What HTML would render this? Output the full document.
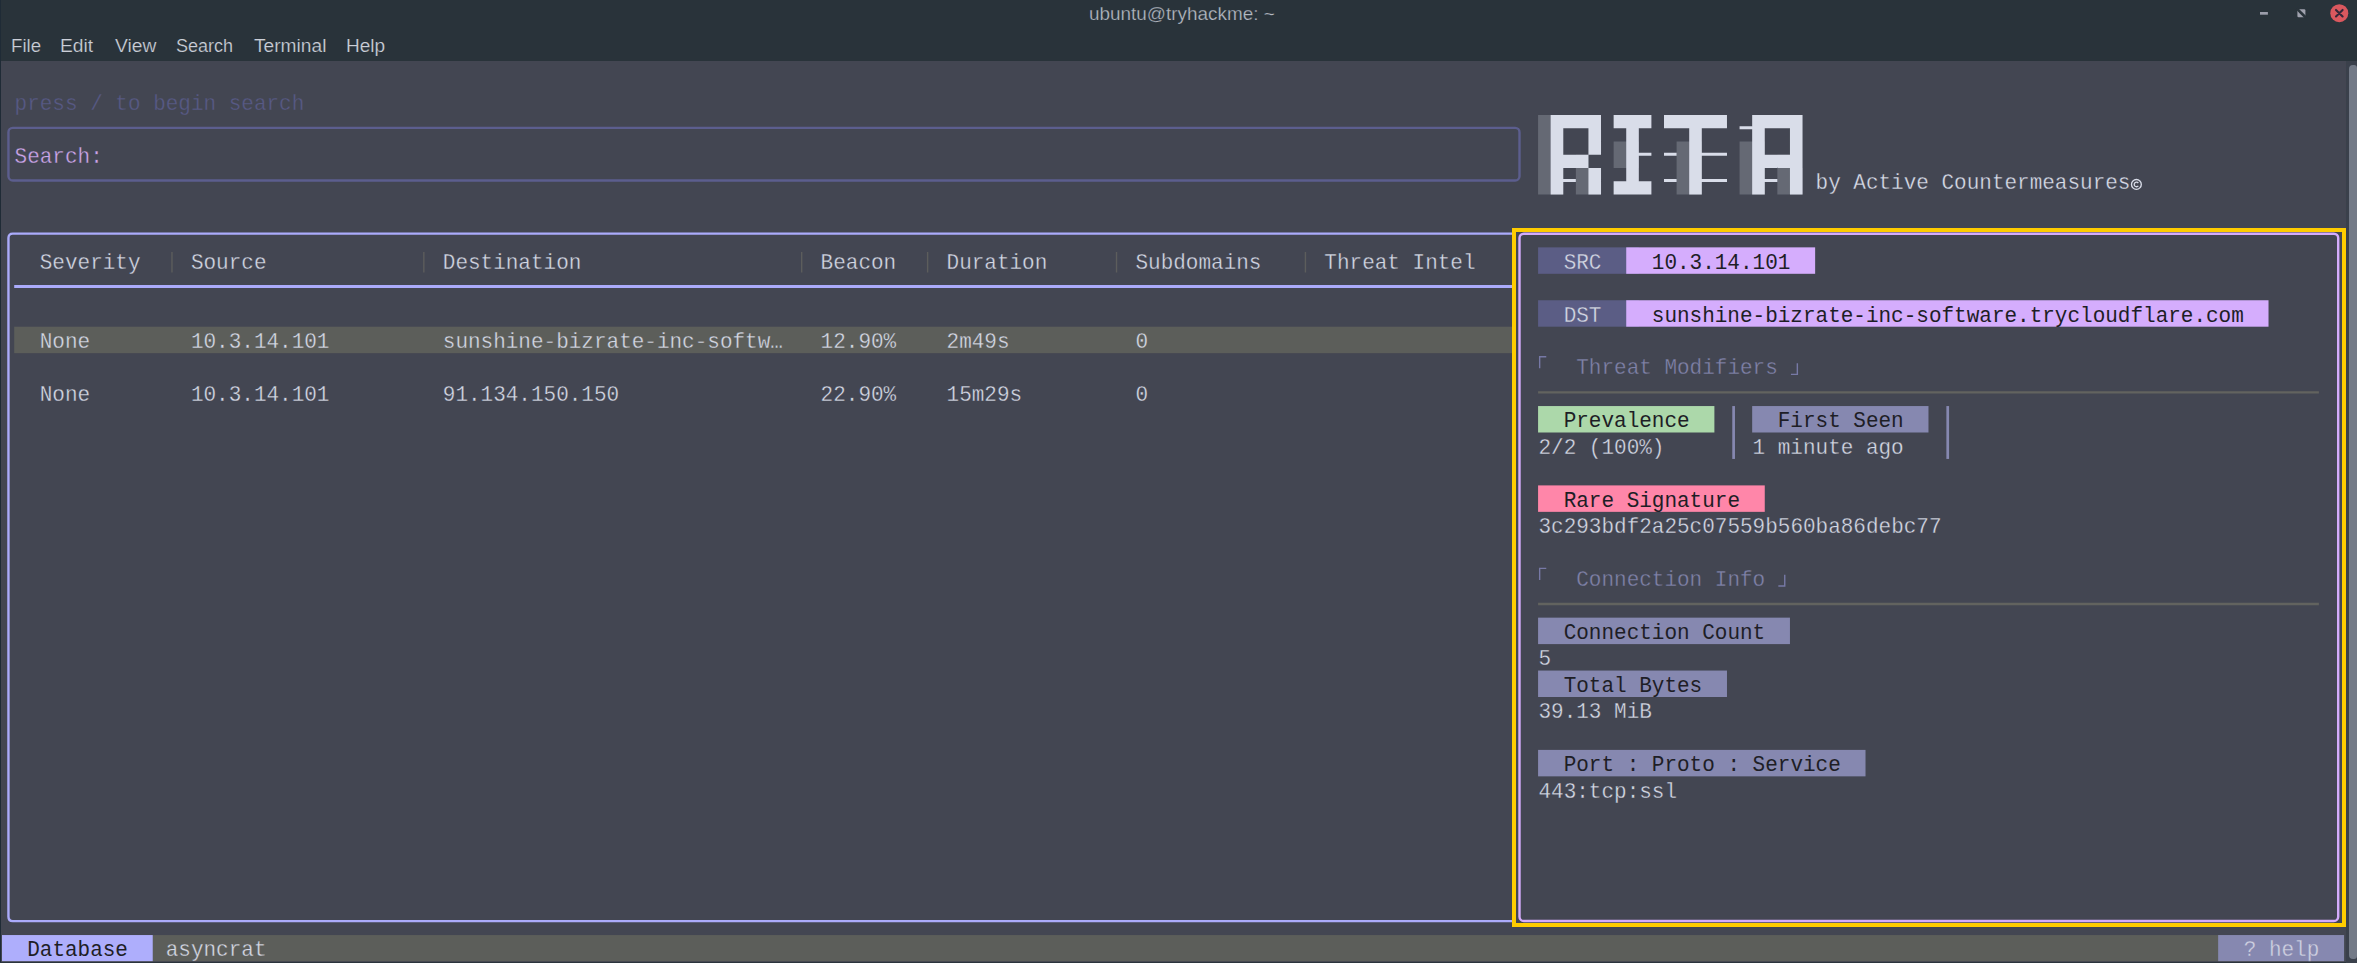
<!DOCTYPE html>
<html><head><meta charset="utf-8"><title>ubuntu@tryhackme: ~</title><style>
html,body{margin:0;padding:0;}
body{width:2357px;height:963px;background:#434652;position:relative;overflow:hidden;font-family:"Liberation Mono",monospace;}
body>div,body>span,body>svg{position:absolute;display:block;}
.t{font-family:"Liberation Mono",monospace;font-size:21px;line-height:26.45px;height:26.45px;letter-spacing:-0.006px;white-space:pre;margin-top:3.3px;-webkit-text-stroke:0.3px #434652;transform:scaleY(1.06);transform-origin:0 18.8px;}
.ttl{font-family:"Liberation Sans",sans-serif;font-size:18.6px;line-height:24px;color:#b4b9c2;-webkit-text-stroke:0.25px #29333a;white-space:pre;transform-origin:0 0;}
.mn{font-family:"Liberation Sans",sans-serif;font-size:17.5px;line-height:24px;color:#cbcfd8;-webkit-text-stroke:0.2px #29333a;white-space:pre;transform-origin:0 0;}
</style></head><body>
<div style="left:0.00px;top:0.00px;width:2357.00px;height:61.00px;background:#29333a;"></div>
<span class="ttl" style="left:1088.6px;top:1.9px;transform:scaleX(1.017);">ubuntu@tryhackme: ~</span>
<span class="mn" style="left:10.6px;top:34.2px;transform:scaleX(1.067);">File</span>
<span class="mn" style="left:60.2px;top:34.2px;transform:scaleX(1.1);">Edit</span>
<span class="mn" style="left:114.6px;top:34.2px;transform:scaleX(1.1);">View</span>
<span class="mn" style="left:176.2px;top:34.2px;transform:scaleX(1.03);">Search</span>
<span class="mn" style="left:253.6px;top:34.2px;transform:scaleX(1.095);">Terminal</span>
<span class="mn" style="left:345.8px;top:34.2px;transform:scaleX(1.089);">Help</span>
<svg style="left:2255px;top:0px" width="102" height="30" viewBox="2255 0 102 30"><rect x="2260" y="12" width="7.9" height="2.7" fill="#9b9daa"/><rect x="2297.4" y="9.2" width="8" height="8" rx="1.2" fill="#a0a2ae"/><path d="M2296.6 8.4 L2306.2 18" stroke="#29333a" stroke-width="2.7"/><circle cx="2339.3" cy="13.2" r="9" fill="#da585e"/><path d="M2336 9.9 L2342.6 16.5 M2342.6 9.9 L2336 16.5" stroke="#35283a" stroke-width="2.1" stroke-linecap="round"/></svg>
<div style="left:0.00px;top:0.00px;width:1.00px;height:963.00px;background:#1f2b36;"></div>
<div style="left:0.00px;top:962.00px;width:2357.00px;height:1.00px;background:#2b343c;"></div>
<div style="left:2346.00px;top:61.00px;width:11.00px;height:902.00px;background:#3a404b;"></div>
<div style="left:2349.00px;top:65.00px;width:8.00px;height:894.00px;background:#737a87;border-radius:4px 3px 3px 4px;"></div>
<svg style="left:0;top:0" width="2357" height="963" viewBox="0 0 2357 963"><path d="M1538.07 115.10h12.59v13.22h-12.59zM1550.66 115.10h12.59v13.22h-12.59zM1538.07 128.32h12.59v13.22h-12.59zM1550.66 128.32h12.59v13.22h-12.59zM1538.07 141.55h12.59v13.22h-12.59zM1550.66 141.55h12.59v13.22h-12.59zM1538.07 154.77h12.59v13.22h-12.59zM1550.66 154.77h12.59v13.22h-12.59zM1538.07 168.00h12.59v13.22h-12.59zM1550.66 168.00h12.59v13.22h-12.59zM1538.07 181.22h12.59v13.22h-12.59zM1550.66 181.22h12.59v13.22h-12.59zM1575.85 168.00h12.59v13.22h-12.59zM1588.44 168.00h12.59v13.22h-12.59zM1575.85 154.77h12.59v13.22h-12.59zM1575.85 181.22h12.59v13.22h-12.59zM1588.44 181.22h12.59v13.22h-12.59zM1613.63 141.55h12.59v13.22h-12.59zM1626.23 141.55h12.59v13.22h-12.59zM1613.63 154.77h12.59v13.22h-12.59zM1626.23 154.77h12.59v13.22h-12.59zM1676.60 141.55h12.59v13.22h-12.59zM1689.20 141.55h12.59v13.22h-12.59zM1676.60 154.77h12.59v13.22h-12.59zM1689.20 154.77h12.59v13.22h-12.59zM1676.60 168.00h12.59v13.22h-12.59zM1689.20 168.00h12.59v13.22h-12.59zM1676.60 181.22h12.59v13.22h-12.59zM1689.20 181.22h12.59v13.22h-12.59zM1739.57 141.55h12.59v13.22h-12.59zM1752.17 141.55h12.59v13.22h-12.59zM1739.57 154.77h12.59v13.22h-12.59zM1752.17 154.77h12.59v13.22h-12.59zM1739.57 168.00h12.59v13.22h-12.59zM1752.17 168.00h12.59v13.22h-12.59zM1739.57 181.22h12.59v13.22h-12.59zM1752.17 181.22h12.59v13.22h-12.59zM1777.35 168.00h12.59v13.22h-12.59zM1789.95 168.00h12.59v13.22h-12.59zM1777.35 154.77h12.59v13.22h-12.59zM1777.35 181.22h12.59v13.22h-12.59zM1789.95 181.22h12.59v13.22h-12.59z" fill="#656974"/><path d="M1550.66 115.10h12.59v13.22h-12.59zM1550.66 128.32h12.59v13.22h-12.59zM1550.66 141.55h12.59v13.22h-12.59zM1550.66 154.77h12.59v13.22h-12.59zM1550.66 168.00h12.59v13.22h-12.59zM1550.66 181.22h12.59v13.22h-12.59zM1563.26 115.10h12.59v13.22h-12.59zM1563.26 154.77h12.59v13.22h-12.59zM1575.85 115.10h12.59v13.22h-12.59zM1575.85 154.77h12.59v13.22h-12.59zM1588.44 115.10h12.59v13.22h-12.59zM1588.44 128.32h12.59v13.22h-12.59zM1588.44 141.55h12.59v13.22h-12.59zM1588.44 168.00h12.59v13.22h-12.59zM1588.44 181.22h12.59v13.22h-12.59zM1613.63 115.10h12.59v13.22h-12.59zM1613.63 181.22h12.59v13.22h-12.59zM1626.23 115.10h12.59v13.22h-12.59zM1626.23 128.32h12.59v13.22h-12.59zM1626.23 141.55h12.59v13.22h-12.59zM1626.23 154.77h12.59v13.22h-12.59zM1626.23 168.00h12.59v13.22h-12.59zM1626.23 181.22h12.59v13.22h-12.59zM1638.82 115.10h12.59v13.22h-12.59zM1638.82 181.22h12.59v13.22h-12.59zM1664.01 115.10h12.59v13.22h-12.59zM1676.60 115.10h12.59v13.22h-12.59zM1689.20 115.10h12.59v13.22h-12.59zM1689.20 128.32h12.59v13.22h-12.59zM1689.20 141.55h12.59v13.22h-12.59zM1689.20 154.77h12.59v13.22h-12.59zM1689.20 168.00h12.59v13.22h-12.59zM1689.20 181.22h12.59v13.22h-12.59zM1701.79 115.10h12.59v13.22h-12.59zM1714.38 115.10h12.59v13.22h-12.59zM1752.17 115.10h12.59v13.22h-12.59zM1752.17 128.32h12.59v13.22h-12.59zM1752.17 141.55h12.59v13.22h-12.59zM1752.17 154.77h12.59v13.22h-12.59zM1752.17 168.00h12.59v13.22h-12.59zM1752.17 181.22h12.59v13.22h-12.59zM1764.76 115.10h12.59v13.22h-12.59zM1764.76 154.77h12.59v13.22h-12.59zM1777.35 115.10h12.59v13.22h-12.59zM1777.35 154.77h12.59v13.22h-12.59zM1789.95 115.10h12.59v13.22h-12.59zM1789.95 128.32h12.59v13.22h-12.59zM1789.95 141.55h12.59v13.22h-12.59zM1789.95 154.77h12.59v13.22h-12.59zM1789.95 168.00h12.59v13.22h-12.59zM1789.95 181.22h12.59v13.22h-12.59zM1563.26 179.12h12.59v3.00h-12.59zM1638.82 152.68h12.59v3.00h-12.59zM1664.01 152.68h12.59v3.00h-12.59zM1664.01 179.12h12.59v3.00h-12.59zM1701.79 152.68h25.19v3.00h-25.19zM1701.79 179.12h25.19v3.00h-25.19zM1739.57 126.22h12.59v3.00h-12.59zM1764.76 179.12h12.59v3.00h-12.59z" fill="#d9dde9"/><rect x="14.19" y="326.70" width="1498.81" height="26.45" fill="#5c5e5a"/><rect x="1538.07" y="247.35" width="100.75" height="26.45" fill="#5b5d85"/><rect x="1626.23" y="247.35" width="188.91" height="26.45" fill="#d5adfd"/><rect x="1538.07" y="300.25" width="100.75" height="26.45" fill="#5b5d85"/><rect x="1626.23" y="300.25" width="642.29" height="26.45" fill="#d5adfd"/><rect x="1538.07" y="406.05" width="176.32" height="26.45" fill="#acd8aa"/><rect x="1732.27" y="406.05" width="2.70" height="52.90" fill="#8688b0"/><rect x="1752.17" y="406.05" width="176.32" height="26.45" fill="#8688b0"/><rect x="1946.37" y="406.05" width="2.70" height="52.90" fill="#8688b0"/><rect x="1538.07" y="485.40" width="226.69" height="26.45" fill="#ff86a9"/><rect x="1538.07" y="617.65" width="251.88" height="26.45" fill="#8688b0"/><rect x="1538.07" y="670.55" width="188.91" height="26.45" fill="#8688b0"/><rect x="1538.07" y="749.90" width="327.44" height="26.45" fill="#8688b0"/><rect x="2.00" y="935.05" width="2342.08" height="26.10" fill="#5c5e5a"/><rect x="2.00" y="935.05" width="150.73" height="26.10" fill="#aeaefc"/><rect x="2218.14" y="935.05" width="125.94" height="26.10" fill="#8688b0"/></svg>
<span class="t" style="left:14.59px;top:88.65px;color:#585a86;">press / to begin search</span>
<span class="t" style="left:14.59px;top:141.55px;color:#cea6ec;">Search:</span>
<span class="t" style="left:1815.54px;top:168.00px;color:#d9dde9;">by Active Countermeasures</span>
<span class="t" style="left:39.78px;top:247.35px;color:#d4d8e4;">Severity</span>
<span class="t" style="left:190.91px;top:247.35px;color:#d4d8e4;">Source</span>
<span class="t" style="left:442.79px;top:247.35px;color:#d4d8e4;">Destination</span>
<span class="t" style="left:820.61px;top:247.35px;color:#d4d8e4;">Beacon</span>
<span class="t" style="left:946.55px;top:247.35px;color:#d4d8e4;">Duration</span>
<span class="t" style="left:1135.46px;top:247.35px;color:#d4d8e4;">Subdomains</span>
<span class="t" style="left:1324.37px;top:247.35px;color:#d4d8e4;">Threat Intel</span>
<span class="t" style="left:39.78px;top:326.70px;color:#d4d8e4;-webkit-text-stroke-color:#5c5e5a;">None</span>
<span class="t" style="left:190.91px;top:326.70px;color:#d4d8e4;-webkit-text-stroke-color:#5c5e5a;">10.3.14.101</span>
<span class="t" style="left:442.79px;top:326.70px;color:#d4d8e4;-webkit-text-stroke-color:#5c5e5a;">sunshine-bizrate-inc-softw…</span>
<span class="t" style="left:820.61px;top:326.70px;color:#d4d8e4;-webkit-text-stroke-color:#5c5e5a;">12.90%</span>
<span class="t" style="left:946.55px;top:326.70px;color:#d4d8e4;-webkit-text-stroke-color:#5c5e5a;">2m49s</span>
<span class="t" style="left:1135.46px;top:326.70px;color:#d4d8e4;-webkit-text-stroke-color:#5c5e5a;">0</span>
<span class="t" style="left:39.78px;top:379.60px;color:#d4d8e4;">None</span>
<span class="t" style="left:190.91px;top:379.60px;color:#d4d8e4;">10.3.14.101</span>
<span class="t" style="left:442.79px;top:379.60px;color:#d4d8e4;">91.134.150.150</span>
<span class="t" style="left:820.61px;top:379.60px;color:#d4d8e4;">22.90%</span>
<span class="t" style="left:946.55px;top:379.60px;color:#d4d8e4;">15m29s</span>
<span class="t" style="left:1135.46px;top:379.60px;color:#d4d8e4;">0</span>
<span class="t" style="left:1563.66px;top:247.35px;color:#d4d8e4;-webkit-text-stroke-color:#5b5d85;">SRC</span>
<span class="t" style="left:1651.81px;top:247.35px;color:#1e1e26;-webkit-text-stroke-width:0;">10.3.14.101</span>
<span class="t" style="left:1563.66px;top:300.25px;color:#d4d8e4;-webkit-text-stroke-color:#5b5d85;">DST</span>
<span class="t" style="left:1651.81px;top:300.25px;color:#1e1e26;-webkit-text-stroke-width:0;">sunshine-bizrate-inc-software.trycloudflare.com</span>
<span class="t" style="left:1576.25px;top:353.15px;color:#8082a9;">Threat Modifiers</span>
<span class="t" style="left:1563.66px;top:406.05px;color:#1e1e26;-webkit-text-stroke-width:0;">Prevalence</span>
<span class="t" style="left:1777.75px;top:406.05px;color:#1e1e26;-webkit-text-stroke-width:0;">First Seen</span>
<span class="t" style="left:1538.47px;top:432.50px;color:#d4d8e4;">2/2 (100%)</span>
<span class="t" style="left:1752.57px;top:432.50px;color:#d4d8e4;">1 minute ago</span>
<span class="t" style="left:1563.66px;top:485.40px;color:#1e1e26;-webkit-text-stroke-width:0;">Rare Signature</span>
<span class="t" style="left:1538.47px;top:511.85px;color:#d4d8e4;">3c293bdf2a25c07559b560ba86debc77</span>
<span class="t" style="left:1576.25px;top:564.75px;color:#8082a9;">Connection Info</span>
<span class="t" style="left:1563.66px;top:617.65px;color:#1e1e26;-webkit-text-stroke-width:0;">Connection Count</span>
<span class="t" style="left:1538.47px;top:644.10px;color:#d4d8e4;">5</span>
<span class="t" style="left:1563.66px;top:670.55px;color:#1e1e26;-webkit-text-stroke-width:0;">Total Bytes</span>
<span class="t" style="left:1538.47px;top:697.00px;color:#d4d8e4;">39.13 MiB</span>
<span class="t" style="left:1563.66px;top:749.90px;color:#1e1e26;-webkit-text-stroke-width:0;">Port : Proto : Service</span>
<span class="t" style="left:1538.47px;top:776.35px;color:#d4d8e4;">443:tcp:ssl</span>
<svg style="left:0;top:0" width="2357" height="963" viewBox="0 0 2357 963"><rect x="8.45" y="127.90" width="1511.05" height="52.60" rx="4.3" ry="4.3" fill="none" stroke="#5c5e8e" stroke-width="2.4"/><path d="M1513 233.65 L12.75 233.65 Q8.45 233.65 8.45 237.95000000000002 L8.45 916.8000000000001 Q8.45 921.1 12.75 921.1 L1513 921.1" stroke="#ababfb" stroke-width="2.4" fill="none"/><path d="M14.19 286.55 L1513.00 286.55" stroke="#ababfb" stroke-width="2.9" fill="none"/><path d="M171.97 252.00 L171.97 272.50" stroke="#5c5d5c" stroke-width="1.4" fill="none"/><path d="M423.85 252.00 L423.85 272.50" stroke="#5c5d5c" stroke-width="1.4" fill="none"/><path d="M801.67 252.00 L801.67 272.50" stroke="#5c5d5c" stroke-width="1.4" fill="none"/><path d="M927.61 252.00 L927.61 272.50" stroke="#5c5d5c" stroke-width="1.4" fill="none"/><path d="M1116.52 252.00 L1116.52 272.50" stroke="#5c5d5c" stroke-width="1.4" fill="none"/><path d="M1305.43 252.00 L1305.43 272.50" stroke="#5c5d5c" stroke-width="1.4" fill="none"/><rect x="1519.50" y="233.70" width="818.70" height="687.30" rx="4.3" ry="4.3" fill="none" stroke="#d4acfc" stroke-width="2.4"/><path d="M1546.27 356.75 L1539.67 356.75 L1539.67 368.35" stroke="#7779a6" stroke-width="1.4" fill="none"/><path d="M1790.95 374.35 L1797.35 374.35 L1797.35 363.15" stroke="#7779a6" stroke-width="1.4" fill="none"/><path d="M1538.07 392.40 L2318.90 392.40" stroke="#62635f" stroke-width="2.3" fill="none"/><path d="M1546.27 568.35 L1539.67 568.35 L1539.67 579.95" stroke="#7779a6" stroke-width="1.4" fill="none"/><path d="M1778.35 585.95 L1784.75 585.95 L1784.75 574.75" stroke="#7779a6" stroke-width="1.4" fill="none"/><path d="M1538.07 604.00 L2318.90 604.00" stroke="#62635f" stroke-width="2.3" fill="none"/><circle cx="2136.4" cy="184.4" r="4.9" fill="none" stroke="#d9dde9" stroke-width="1.35"/><path d="M2138.3 183.0 A2.3 2.3 0 1 0 2138.3 185.9" fill="none" stroke="#d9dde9" stroke-width="1.3"/></svg>
<div style="left:1512px;top:228px;width:834px;height:699px;box-sizing:border-box;border:4px solid #ffcc00;"></div>
<span class="t" style="left:27.19px;top:935.05px;color:#1e1e26;-webkit-text-stroke-width:0;">Database</span>
<span class="t" style="left:165.72px;top:935.05px;color:#d4d8e4;-webkit-text-stroke-color:#5c5e5a;">asyncrat</span>
<span class="t" style="left:2243.73px;top:935.05px;color:#d0d2e2;-webkit-text-stroke-color:#8688b0;">? help</span>
</body></html>
